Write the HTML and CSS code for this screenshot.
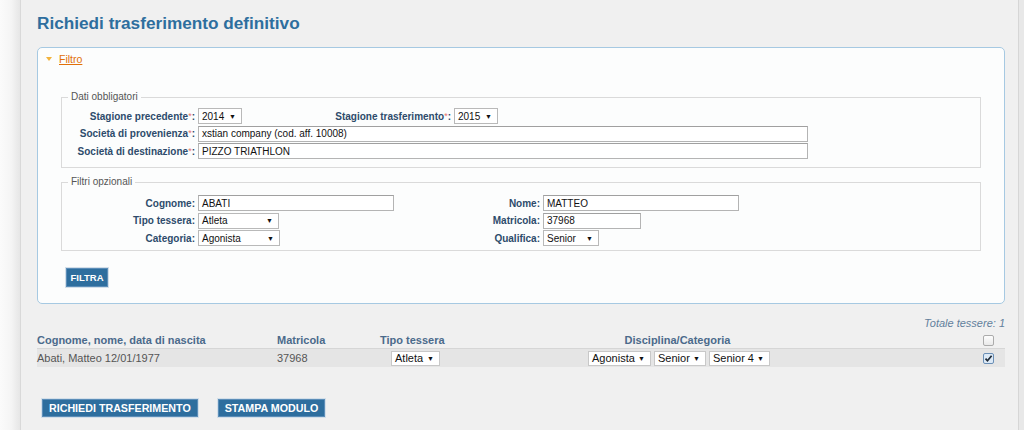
FILE: index.html
```html
<!DOCTYPE html>
<html lang="it">
<head>
<meta charset="utf-8">
<title>Richiedi trasferimento definitivo</title>
<link rel="stylesheet" href="styles.css">
</head>
<body>
<div class="shell">
  <div class="gutter"></div>
  <main class="page">
    <h1 class="title">Richiedi trasferimento definitivo</h1>

    <section class="panel">
      <div class="panel-head"><span class="caret"></span><a class="panel-link" href="#">Filtro</a></div>
      <div class="panel-body">
        <fieldset class="fs fs-req">
          <legend>Dati obbligatori</legend>
          <div class="row">
            <span class="lbl lbl-main">Stagione precedente<span class="req">*</span>:</span>
            <span class="sel w44"><span>2014</span><span class="arr">▼</span></span>
            <span class="lbl lbl-second">Stagione trasferimento<span class="req">*</span>:</span>
            <span class="sel w44"><span>2015</span><span class="arr">▼</span></span>
          </div>
          <div class="row">
            <span class="lbl lbl-main">Società di provenienza<span class="req">*</span>:</span>
            <span class="inp w610">xstian company (cod. aff. 10008)</span>
          </div>
          <div class="row">
            <span class="lbl lbl-main">Società di destinazione<span class="req">*</span>:</span>
            <span class="inp w610">PIZZO TRIATHLON</span>
          </div>
        </fieldset>

        <fieldset class="fs fs-opt">
          <legend>Filtri opzionali</legend>
          <div class="opt-grid">
            <span class="lbl">Cognome:</span>
            <span class="inp w196">ABATI</span>
            <span class="lbl">Nome:</span>
            <span class="inp w196">MATTEO</span>

            <span class="lbl">Tipo tessera:</span>
            <span class="sel w81"><span>Atleta</span><span class="arr">▼</span></span>
            <span class="lbl">Matricola:</span>
            <span class="inp w98">37968</span>

            <span class="lbl">Categoria:</span>
            <span class="sel w82"><span>Agonista</span><span class="arr">▼</span></span>
            <span class="lbl">Qualifica:</span>
            <span class="sel w56"><span>Senior</span><span class="arr">▼</span></span>
          </div>
        </fieldset>

        <button class="btn btn-small" type="button">FILTRA</button>
      </div>
    </section>

    <div class="total">Totale tessere: 1</div>

    <div class="results">
      <div class="res-row res-head">
        <span class="c1">Cognome, nome, data di nascita</span>
        <span class="c2">Matricola</span>
        <span class="c3">Tipo tessera</span>
        <span class="c4 center">Disciplina/Categoria</span>
        <span class="c5"><span class="cb"></span></span>
      </div>
      <div class="res-row res-data">
        <span class="c1">Abati, Matteo 12/01/1977</span>
        <span class="c2">37968</span>
        <span class="c3"><span class="sel sel-row w49"><span>Atleta</span><span class="arr">▼</span></span></span>
        <span class="c4 center sels">
          <span class="sel sel-row w63"><span>Agonista</span><span class="arr">▼</span></span>
          <span class="sel sel-row w52"><span>Senior</span><span class="arr">▼</span></span>
          <span class="sel sel-row w61"><span>Senior 4</span><span class="arr">▼</span></span>
        </span>
        <span class="c5"><span class="cb cb-on"><svg viewBox="0 0 11 11" width="11" height="11"><path d="M2.5 5.6 L4.5 7.8 L8.6 2.8" fill="none" stroke="#1f2a36" stroke-width="1.7"/></svg></span></span>
      </div>
    </div>

    <div class="actions">
      <button class="btn" type="button">RICHIEDI TRASFERIMENTO</button>
      <button class="btn" type="button">STAMPA MODULO</button>
    </div>
  </main>
  <div class="gutter-r"></div>
</div>
</body>
</html>
```

FILE: styles.css
```css
* { box-sizing: border-box; }
html, body { margin: 0; }
body {
  background: #ebebeb;
  font-family: "Liberation Sans", Arial, sans-serif;
  color: #222;
}
.shell { display: flex; height: 430px; overflow: hidden; }
.gutter {
  width: 20px; flex: none;
  background: linear-gradient(to right, #fbfbfb 0%, #f5f5f5 55%, #e6e6e6 100%);
}
.page {
  width: 999px; flex: none;
  background: #f0f0f0;
  border-left: 1px solid #d9d9d9;
  border-right: 1px solid #d6d6d6;
  padding: 13px 13px 0 16px;
}
.gutter-r { flex: 1; background: #e8e8e8; }

.title {
  margin: 0 0 14px;
  font-size: 17.2px; line-height: 20px; font-weight: bold;
  color: #2e6e9e;
}

.panel { border: 1px solid #a6c9e2; border-radius: 5px; background: #fcfdfd; }
.panel-head { height: 22px; display: flex; align-items: center; padding-left: 8px; }
.caret {
  width: 0; height: 0;
  border-left: 3px solid transparent; border-right: 3px solid transparent;
  border-top: 4px solid #f2b33d;
  margin-right: 7px;
}
.panel-link { font-size: 10.5px; color: #e17009; text-decoration: underline; }
.panel-body { padding: 21px 23px 16px; }

.fs { margin: 0; border: 1px solid #dadada; min-width: 0; }
.fs legend {
  font-size: 10px; line-height: 12px; color: #555;
  padding: 0 3px; margin-left: 6px;
}
.fs-req { padding: 5px 0 8px; }
.fs-opt { margin-top: 8px; padding: 7px 0 4px; }

.row { display: flex; align-items: center; height: 16px; }
.row + .row { margin-top: 1.5px; }

.lbl {
  font-size: 10px; font-weight: bold; color: #2d4b6b;
  text-align: right; white-space: nowrap;
}
.lbl-main { width: 133px; margin-right: 3px; }
.lbl-second { width: 209px; margin-right: 3px; }
.req { color: #e8706a; font-size: 9px; vertical-align: 1px; font-weight: normal; }

.inp {
  display: inline-flex; align-items: center;
  height: 16px; padding: 0 3px;
  background: #fff; border: 1px solid #b4b4b4; border-top-color: #a0a0a0;
  font-size: 10px; color: #111; white-space: nowrap;
}
.sel {
  display: inline-flex; align-items: center; justify-content: space-between;
  height: 16px; padding: 0 5px 0 3px;
  background: #fff; border: 1px solid #b9b9b9;
  font-size: 10px; color: #111; white-space: nowrap;
}
.sel .arr { font-size: 7px; color: #111; }
.sel-row { height: 15px; font-size: 11px; border-color: #c8c8c8; }

.w44 { width: 44px; }
.w49 { width: 49px; }
.w52 { width: 52px; }
.w56 { width: 56px; }
.w61 { width: 61px; }
.w63 { width: 63px; }
.w81 { width: 81px; }
.w82 { width: 82px; }
.w98 { width: 98px; }
.w196 { width: 196px; }
.w610 { width: 610px; }

.opt-grid {
  display: grid;
  grid-template-columns: 133px 197px 142px auto;
  grid-auto-rows: 16px;
  column-gap: 3px; row-gap: 1.5px;
  align-items: center; justify-items: start;
}
.opt-grid .lbl { justify-self: end; }

.btn {
  display: inline-flex; align-items: center; justify-content: center;
  height: 18px; padding: 0 6px;
  background: #2e6e9e; color: #fff;
  border: 1px solid #5b8db8;
  box-shadow: 0 0 0 1px #d3dfe9;
  font-family: "Liberation Sans", Arial, sans-serif;
  font-size: 10.7px; font-weight: bold; white-space: nowrap;
  cursor: pointer;
}
.btn-small { margin: 17px 0 0 5px; width: 42px; height: 19px; font-size: 9.5px; padding: 0; }

.total {
  margin-top: 13px;
  text-align: right;
  font-size: 11px; line-height: 13px; font-style: italic;
  color: #627f9c;
}

.res-row {
  display: grid;
  grid-template-columns: 240px 103px 75px 445px 105px;
  align-items: center;
}
.res-head {
  height: 18px; padding-top: 2px;
  font-size: 11px; font-weight: bold; color: #4b6a8b;
}
.res-data {
  height: 19px;
  background: #e5e5e5;
  border-top: 1px solid #d6d6d6;
  font-size: 11px; color: #555;
}
.center { text-align: center; }
.sels { display: flex; justify-content: center; gap: 3px; padding-left: 3px; }
.res-data .c3 .sel { margin-left: 11px; }
.c5 { display: flex; justify-content: flex-end; padding-right: 11px; }
.cb {
  display: block; width: 11px; height: 11px;
  border: 1px solid #ababab; border-radius: 2px;
  background: linear-gradient(#fdfdfd, #e9e9e9);
}
.cb-on { border-color: #6b8fb6; background: #dce9f6; position: relative; }
.cb-on svg { position: absolute; left: -1px; top: -1px; }

.actions { display: flex; gap: 20px; margin: 32px 0 0 5px; }
```
